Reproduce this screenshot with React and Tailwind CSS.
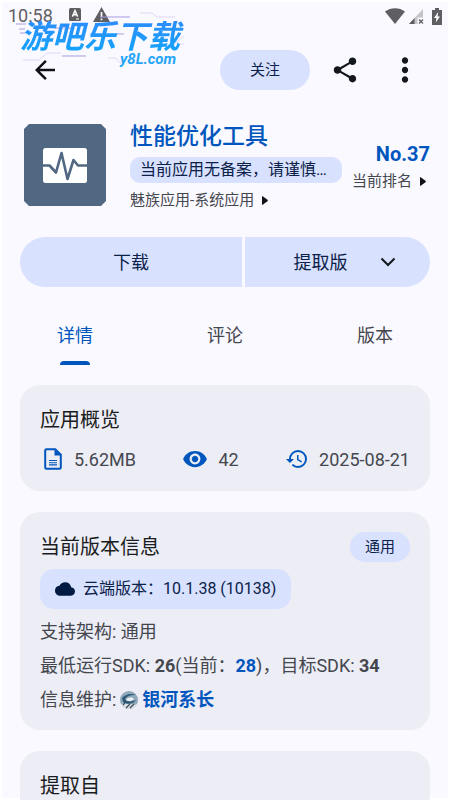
import React from "react";
import {
  MdArrowBack,
  MdCloud,
  MdHistory,
  MdMoreVert,
  MdRemoveRedEye,
  MdShare,
} from "react-icons/md";

function StatusBar() {
  return (
    <div className="flex h-8 shrink-0 items-center justify-between pl-2 pr-2 text-[#5f5f63]">
      <div className="flex items-center">
        <span className="text-[18px] leading-5">10:58</span>
        <svg className="ml-4 -mt-1" width="12" height="13" viewBox="0 0 12 13">
          <rect width="12" height="13" rx="1.5" fill="currentColor" />
          <path d="M3.4 8.6 6 2.6l2.6 6M4.4 6.8h3.2" fill="none" stroke="#fff" strokeWidth="1.5" />
          <path d="M7 11h3" stroke="#fff" strokeWidth="1" />
        </svg>
        <svg className="ml-3 -mt-1" width="17" height="15" viewBox="0 0 17 15">
          <path d="M8.5 0 17 15H0z" fill="currentColor" />
          <path d="M8.5 5v5M8.5 11.4v1.8" stroke="#fff" strokeWidth="1.7" />
        </svg>
      </div>
      <div className="flex items-center">
        <svg width="20" height="16" viewBox="0 0 20 16">
          <path d="M10 16 0 3.6C5.6-1 14.4-1 20 3.6z" fill="currentColor" />
        </svg>
        <svg className="ml-1" width="15" height="15" viewBox="0 0 15 15">
          <path d="M14 0v8.5H8.5V15H0z" fill="#c4c4c8" />
          <path d="M5.5 9v6H0z" fill="currentColor" />
          <path d="m10 10.5 4 4m0-4-4 4" stroke="currentColor" strokeWidth="1.3" />
        </svg>
        <svg className="ml-2" width="10" height="17" viewBox="0 0 10 17">
          <path d="M3 0h4v2h3v15H0V2h3z" fill="currentColor" />
          <path d="M6.2 4 2 10h2.4L3.8 14.5 8 8.5H5.6z" fill="#fff" />
        </svg>
      </div>
    </div>
  );
}

function Watermark() {
  return (
    <div className="pointer-events-none absolute left-5 top-[21px] flex w-[170px] flex-col" aria-hidden="true">
      <svg className="absolute -left-1 -top-[9px]" width="170" height="52" viewBox="0 0 170 52" fill="none" strokeWidth="1">
        <path d="M84 5h30M0 12h10M3 17h6M4 21h5M38 16h18M100 22h8M46 44h24" stroke="#a99be0" />
        <path d="M124 1h12l5 4h18M7 48h16l8-7h14M92 46h8l5 6M156 34l12-10M162 32h6" stroke="#ddd8f5" />
      </svg>
      <span className="relative whitespace-nowrap bg-gradient-to-b from-[#2b8dfb] to-[#0fa4fb] bg-clip-text text-[32px] font-bold italic leading-8 text-transparent">
        游吧乐下载
      </span>
      <span className="relative ml-[100px] text-[15px] font-bold italic leading-3 text-[#25a5f7]">
        y8L.com
      </span>
    </div>
  );
}

function Caret() {
  return (
    <svg width="6" height="9" viewBox="0 0 6 9" className="shrink-0">
      <path d="M0 1Q0-.4 1 .4L5.5 3.7Q6.2 4.5 5.5 5.3L1 8.6Q0 9.4 0 8z" fill="#111318" />
    </svg>
  );
}

function AppIcon() {
  return (
    <svg className="mt-0.5 shrink-0" width="82" height="82" viewBox="0 0 82 82">
      <path d="M5 0h72l5 5v72l-5 5H5l-5-5V5z" fill="#506881" />
      <rect x="19" y="24" width="44" height="35" rx="2.5" fill="#fff" />
      <path d="M19 41.5h6.5l6.5 7L37.500 29l6 26 6-19 4.500 5.500H63" fill="none" stroke="#506881" strokeWidth="2.6" strokeLinejoin="round" />
    </svg>
  );
}

function FileIcon() {
  return (
    <svg width="18" height="22" viewBox="0 0 18 22">
      <path d="M2.5 1.2h8.8l5.5 5.5v12.8q0 1.3-1.3 1.3h-13q-1.3 0-1.3-1.3v-17q0-1.3 1.3-1.3z" fill="none" stroke="#0056bd" strokeWidth="2" />
      <path d="M10.500 1v6.500H17z" fill="#0056bd" />
      <path d="M5 12.500h8M5 14.700h8M5 16.900h8" stroke="#0056bd" strokeWidth="1.1" />
    </svg>
  );
}

function Avatar() {
  return (
    <svg width="18" height="18" viewBox="0 0 18 18" className="shrink-0">
      <circle cx="9" cy="9" r="9" fill="#8fa9bb" />
      <path d="M1 13a9 9 0 0 0 16 0c-4 2-7-2-16 0z" fill="#d9dfe6" />
      <path d="M2 7c4-4 9-5 14-3-5-.5-9 1-11 4 2 3 7 3 11 1-2 4-9 5-13 2" fill="#2f5876" />
      <path d="M6 9c2-3 6-3 8-1-2 2-6 3-8 1z" fill="#e9eff3" />
      <path d="m6 17 4-4M10 17l4-4M3 14l2-2" stroke="#3b4a56" strokeWidth="1.2" />
    </svg>
  );
}

function Card({ children, className = "pb-5" }) {
  return (
    <section className={`shrink-0 rounded-[20px] bg-[#ecedf5] px-5 pt-5 ${className}`}>
      {children}
    </section>
  );
}

function CardTitle({ children }) {
  return <h2 className="text-[20px] leading-[30px] text-[#1b1c21]">{children}</h2>;
}

const tabs = ["详情", "评论", "版本"];

export default function App() {
  return (
    <div className="relative flex h-screen flex-col overflow-hidden bg-[#faf9ff] font-[Roboto,'Noto_Sans_CJK_SC',sans-serif] text-[#45474f] ring-2 ring-inset ring-white">
      <StatusBar />
      <header className="mt-[18px] flex h-10 shrink-0 items-center justify-between pl-[30px] pr-[26px]">
        <button aria-label="返回">
          <MdArrowBack size={30} color="#0f1116" />
        </button>
        <div className="flex items-center">
          <button className="h-10 w-[90px] rounded-full bg-[#d8e2ff] text-[15px] text-[#0b2149]">关注</button>
          <button className="ml-5" aria-label="分享">
            <MdShare size={30} color="#14171c" />
          </button>
          <button className="ml-[26px]" aria-label="更多">
            <MdMoreVert size={38} color="#14171c" />
          </button>
        </div>
      </header>
      <Watermark />

      <section className="mt-8 flex shrink-0 pl-6 pr-5">
        <AppIcon />
        <div className="ml-6 min-w-0">
          <h1 className="text-[23px] font-medium leading-[30px] text-[#0056bd]">性能优化工具</h1>
          <p className="mt-[5px] w-[212px] rounded-[10px] bg-[#d8e2ff] px-2.5 text-[16px] leading-[26px] text-[#0b2149]">
            当前应用无备案，请谨慎…
          </p>
          <a href="#category" className="mt-[5px] flex items-center gap-2 text-[15px] leading-6">
            魅族应用-系统应用
            <Caret />
          </a>
        </div>
        <div className="ml-auto flex shrink-0 flex-col items-end self-center">
          <strong className="text-[20px] font-bold leading-7 text-[#0056bd]">No.37</strong>
          <a href="#rank" className="flex items-center gap-2 pr-1 text-[15px] leading-[26px]">
            当前排名
            <Caret />
          </a>
        </div>
      </section>

      <div className="mx-5 mt-[25px] grid h-[50px] shrink-0 grid-cols-[6fr_5fr] gap-[3px] text-[18px] text-[#0b2149]">
        <button className="rounded-l-full rounded-r-[4px] bg-[#d8e2ff]">下载</button>
        <button className="flex items-center justify-center gap-8 rounded-l-[4px] rounded-r-full bg-[#d8e2ff] pl-3.5">
          提取版
          <svg width="16" height="10" viewBox="0 0 16 10">
            <path d="m1.5 1.500 6.500 6.500 6.500-6.500" fill="none" stroke="#14171c" strokeWidth="2" />
          </svg>
        </button>
      </div>

      <nav className="mt-[18px] grid h-[60px] shrink-0 grid-cols-3 text-[18px]">
        {tabs.map((tab, i) => (
          <button key={tab} className={`relative ${i === 0 ? "text-[#0056bd]" : ""}`}>
            {tab}
            {i === 0 && (
              <span className="absolute inset-x-0 bottom-0 mx-auto h-1 w-[30px] rounded-t-[4px] bg-[#0056bd]" />
            )}
          </button>
        ))}
      </nav>

      <main className="mt-5 flex flex-col gap-[21px] px-5">
        <Card>
          <CardTitle>应用概览</CardTitle>
          <div className="mt-3 flex h-6 items-center justify-between pl-1 text-[18px]">
            <span className="flex items-center gap-3">
              <FileIcon />
              5.62MB
            </span>
            <span className="flex items-center gap-2.5">
              <MdRemoveRedEye size={26} color="#0056bd" />
              42
            </span>
            <span className="flex items-center gap-2.5">
              <MdHistory size={24} color="#0056bd" />
              2025-08-21
            </span>
          </div>
        </Card>

        <Card className="pb-[13px]">
          <div className="flex h-[30px] items-center justify-between">
            <CardTitle>当前版本信息</CardTitle>
            <span className="rounded-full bg-[#d8e2ff] px-[15px] text-[15px] leading-[30px] text-[#0b2149]">通用</span>
          </div>
          <div className="mt-[7px] flex h-10 w-fit items-center gap-2 rounded-[14px] bg-[#d8e2ff] px-[15px] text-[16px] text-[#0b2149]">
            <MdCloud size={20} color="#001a41" />
            云端版本：10.1.38 (10138)
          </div>
          <div className="mt-1.5 text-[18px] leading-[34px]">
            <p>支持架构: 通用</p>
            <p className="whitespace-nowrap">
              最低运行SDK: <b>26</b>(当前：<b className="text-[#0056bd]">28</b>)，目标SDK: <b>34</b>
            </p>
            <p className="flex items-center gap-1">
              信息维护:
              <Avatar />
              <a href="#maintainer" className="font-bold text-[#0056bd]">银河系长</a>
            </p>
          </div>
        </Card>

        <Card className="pb-24">
          <CardTitle>提取自</CardTitle>
        </Card>
      </main>
    </div>
  );
}
